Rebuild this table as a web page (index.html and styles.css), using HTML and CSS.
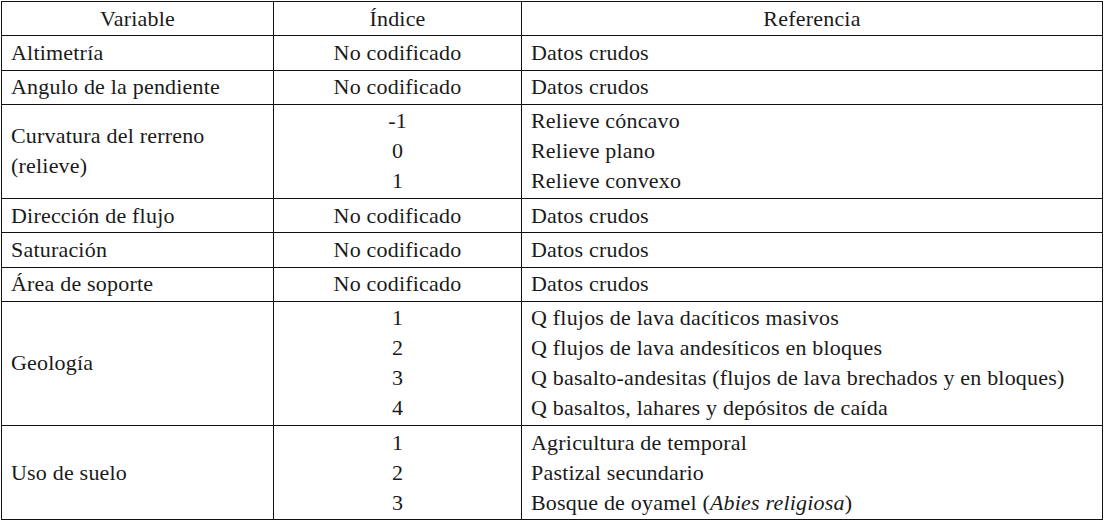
FILE: index.html
```html
<!DOCTYPE html>
<html lang="es">
<head>
<meta charset="utf-8">
<title>Variables</title>
<link rel="stylesheet" href="styles.css">
</head>
<body>
<div class="page">
<table class="vars">
  <colgroup>
    <col class="c-var">
    <col class="c-idx">
    <col class="c-ref">
  </colgroup>
  <thead>
    <tr>
      <th>Variable</th>
      <th>Índice</th>
      <th>Referencia</th>
    </tr>
  </thead>
  <tbody>
    <tr>
      <td>Altimetría</td>
      <td class="idx">No codificado</td>
      <td>Datos crudos</td>
    </tr>
    <tr>
      <td>Angulo de la pendiente</td>
      <td class="idx">No codificado</td>
      <td>Datos crudos</td>
    </tr>
    <tr>
      <td>Curvatura del rerreno<br>(relieve)</td>
      <td class="idx"><div>-1</div><div>0</div><div>1</div></td>
      <td><div>Relieve cóncavo</div><div>Relieve plano</div><div>Relieve convexo</div></td>
    </tr>
    <tr>
      <td>Dirección de flujo</td>
      <td class="idx">No codificado</td>
      <td>Datos crudos</td>
    </tr>
    <tr>
      <td>Saturación</td>
      <td class="idx">No codificado</td>
      <td>Datos crudos</td>
    </tr>
    <tr>
      <td>Área de soporte</td>
      <td class="idx">No codificado</td>
      <td>Datos crudos</td>
    </tr>
    <tr>
      <td>Geología</td>
      <td class="idx"><div>1</div><div>2</div><div>3</div><div>4</div></td>
      <td>
        <div>Q flujos de lava dacíticos masivos</div>
        <div>Q flujos de lava andesíticos en bloques</div>
        <div>Q basalto-andesitas (flujos de lava brechados y en bloques)</div>
        <div>Q basaltos, lahares y depósitos de caída</div>
      </td>
    </tr>
    <tr>
      <td>Uso de suelo</td>
      <td class="idx"><div>1</div><div>2</div><div>3</div></td>
      <td>
        <div>Agricultura de temporal</div>
        <div>Pastizal secundario</div>
        <div>Bosque de oyamel (<i>Abies religiosa</i>)</div>
      </td>
    </tr>
  </tbody>
</table>
</div>
</body>
</html>
```
FILE: styles.css
```css
html, body {
  margin: 0;
  padding: 0;
  background: #ffffff;
}

.page {
  padding: 1px 0 0 1px;
}

.vars {
  border-collapse: collapse;
  table-layout: fixed;
  width: 1101px;
  font-family: "Liberation Serif", "Times New Roman", serif;
  font-size: 22px;
  letter-spacing: 0.2px;
  line-height: 30px;
  color: #1a1a1a;
}

.c-var { width: 272px; }
.c-idx { width: 248px; }
.c-ref { width: 581px; }

.vars th,
.vars td {
  border: 1px solid #111;
  padding: 1.5px 9px 1.75px 9px;
  vertical-align: middle;
  text-align: left;
  white-space: nowrap;
}

.vars th {
  font-weight: normal;
  text-align: center;
}

.vars td.idx {
  text-align: center;
}

.vars i {
  font-style: italic;
}
```
